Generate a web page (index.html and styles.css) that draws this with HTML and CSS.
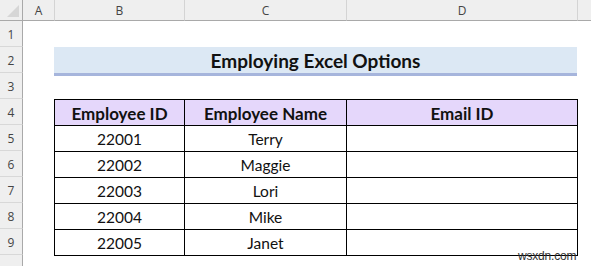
FILE: index.html
```html
<!DOCTYPE html>
<html>
<head>
<meta charset="utf-8">
<link rel="stylesheet" href="styles.css">
</head>
<body>
<div class="sheet">
  <div class="corner"><span class="tri"></span></div>
  <div class="colhdr a">A</div>
  <div class="colhdr sep">B</div>
  <div class="colhdr sep">C</div>
  <div class="colhdr sep">D</div>
  <div class="colhdr sep"></div>

  <div class="rowhdr r1">1</div>
  <div class="rowhdr r2">2</div>
  <div class="rowhdr r3">3</div>
  <div class="rowhdr r4">4</div>
  <div class="rowhdr r5">5</div>
  <div class="rowhdr r6">6</div>
  <div class="rowhdr r7">7</div>
  <div class="rowhdr r8">8</div>
  <div class="rowhdr r9">9</div>
  <div class="rowhdr r10"></div>

  <div class="title">Employing Excel Options</div>

  <div class="table">
    <div class="th">Employee ID</div>
    <div class="th">Employee Name</div>
    <div class="th">Email ID</div>
    <div class="td">22001</div><div class="td">Terry</div><div class="td"></div>
    <div class="td">22002</div><div class="td">Maggie</div><div class="td"></div>
    <div class="td">22003</div><div class="td">Lori</div><div class="td"></div>
    <div class="td">22004</div><div class="td">Mike</div><div class="td"></div>
    <div class="td">22005</div><div class="td">Janet</div><div class="td"></div>
  </div>

  <div class="watermark">wsxdn.com</div>
</div>
</body>
</html>
```

FILE: styles.css
```css
html, body {
  margin: 0;
  padding: 0;
  background: #ffffff;
}
.sheet {
  position: relative;
  width: 591px;
  height: 266px;
  overflow: hidden;
  display: grid;
  grid-template-columns: 23px 31px 130px 162px 231px 1fr;
  grid-template-rows: 21px repeat(9, 26px) 1fr;
  font-family: "Lato", "Open Sans", sans-serif;
}
.corner {
  grid-column: 1;
  grid-row: 1;
  background: #efefef;
  border-right: 1px solid #a9a9a9;
  border-bottom: 1px solid #a9a9a9;
  position: relative;
}
.tri {
  position: absolute;
  right: 3px;
  bottom: 3px;
  width: 0;
  height: 0;
  border-left: 12px solid transparent;
  border-bottom: 12px solid #d6d6d6;
}
.colhdr {
  grid-row: 1;
  background: #efefef;
  border-bottom: 1px solid #a9a9a9;
  display: flex;
  align-items: center;
  justify-content: center;
  font-family: "Open Sans", sans-serif;
  font-size: 12px;
  color: #444;
  padding-top: 1px;
}
.colhdr.sep {
  border-left: 1px solid #d4d4d4;
}
.rowhdr {
  grid-column: 1;
  background: #efefef;
  border-right: 1px solid #a9a9a9;
  border-bottom: 1px solid #d8d8d8;
  display: flex;
  align-items: center;
  justify-content: center;
  font-family: "Open Sans", sans-serif;
  font-size: 12px;
  color: #444;
  padding-top: 2px;
}
.r1 { grid-row: 2; }
.r2 { grid-row: 3; }
.r3 { grid-row: 4; }
.r4 { grid-row: 5; }
.r5 { grid-row: 6; }
.r6 { grid-row: 7; }
.r7 { grid-row: 8; }
.r8 { grid-row: 9; }
.r9 { grid-row: 10; }
.r10 { grid-row: 11; border-bottom: none; }

.title {
  grid-column: 3 / 6;
  grid-row: 3;
  align-self: start;
  height: 25px;
  width: 523px;
  background: #dce8f4;
  border-bottom: 3px solid #a6b5dc;
  display: flex;
  align-items: center;
  justify-content: center;
  font-weight: 700;
  font-size: 19px;
  color: #111;
  padding-top: 1px;
}

.table {
  grid-column: 3 / 6;
  grid-row: 5 / 11;
  align-self: start;
  justify-self: start;
  width: 524px;
  height: 157px;
  box-sizing: border-box;
  display: grid;
  grid-template-columns: 129px 161px 230px;
  grid-template-rows: repeat(6, 25px);
  gap: 1px;
  padding: 1px;
  background: #000;
}
.th, .td {
  display: flex;
  align-items: center;
  justify-content: center;
  color: #111;
  padding-top: 1px;
}
.th {
  background: #e5d7fb;
  font-weight: 700;
  font-size: 17px;
}
.td {
  background: #fff;
  font-size: 15.5px;
}
.watermark {
  position: absolute;
  left: 518px;
  top: 249px;
  font-family: "Liberation Sans", sans-serif;
  font-size: 12px;
  color: #333;
  letter-spacing: -0.2px;
}
```
